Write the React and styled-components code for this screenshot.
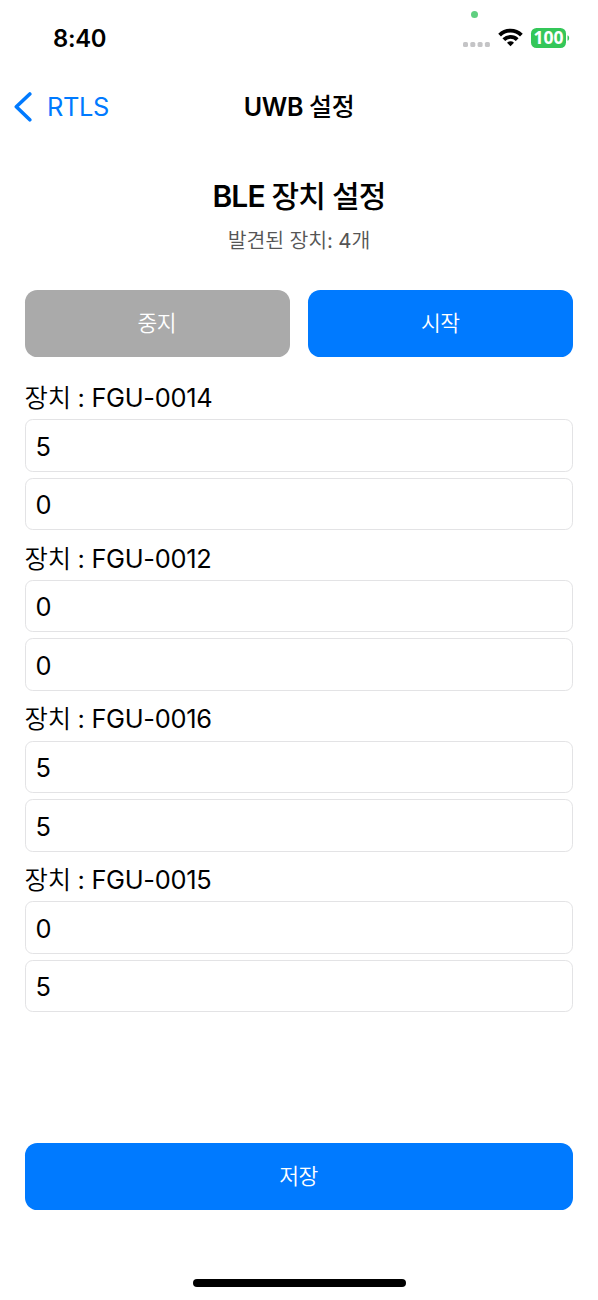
import React from 'react';
import styled, { createGlobalStyle } from 'styled-components';

const GlobalStyle = createGlobalStyle`
    * { box-sizing: border-box; }
    body {
        margin: 0;
        background: #fff;
        font-family: Inter, "Noto Sans CJK KR", sans-serif;
        color: #000;
    }
`;

const Screen = styled.div`
    width: 598px;
    height: 1300px;
    display: flex;
    flex-direction: column;
    overflow: hidden;
    background: #fff;
`;

const StatusBar = styled.div`
    height: 76px;
    padding: 0 28px 0 53px;
    display: flex;
    align-items: center;
    justify-content: space-between;
    position: relative;
`;

const Clock = styled.div`
    font-size: 23.8px;
    font-weight: 600;
    line-height: 28px;
    letter-spacing: -0.3px;
    padding-top: 2px;
`;

const StatusIcons = styled.svg`
    display: block;
    width: 107px;
    height: 34px;
    overflow: visible;
    text {
        font-family: "Open Sans", Inter, sans-serif;
        font-size: 17.5px;
        font-weight: 700;
        fill: #fff;
    }
`;

const CameraDot = styled.div`
    position: absolute;
    top: 11px;
    left: 471px;
    width: 7px;
    height: 7px;
    border-radius: 50%;
    background: #5fcf80;
`;

const NavBar = styled.div`
    height: 60px;
    padding: 2px 14px 0;
    display: grid;
    grid-template-columns: 1fr auto 1fr;
    align-items: center;
`;

const Back = styled.div`
    display: flex;
    align-items: center;
    gap: 15px;
    color: #007aff;
    font-size: 25.4px;
    line-height: 32px;
    letter-spacing: -0.4px;
`;

const NavTitle = styled.div`
    font-size: 25px;
    font-weight: 600;
    line-height: 32px;
    letter-spacing: -0.35px;
`;

// Hangul glyphs run heavier than the latin ones at the same weight
const Ko = styled.span`
    font-weight: ${(props) => props.$weight || 500};
`;

const Content = styled.div`
    flex: 1;
    padding: 0 24.6px;
    display: flex;
    flex-direction: column;
`;

const Title = styled.h1`
    margin: 40px 0 0;
    font-size: 30px;
    font-weight: 600;
    line-height: 40px;
    letter-spacing: -0.85px;
    text-align: center;
`;

const Subtitle = styled.p`
    margin: 10px 0 0;
    font-size: 20.5px;
    line-height: 30px;
    letter-spacing: -0.15px;
    text-align: center;
    color: #555;
`;

const ButtonRow = styled.div`
    display: flex;
    gap: 18.4px;
    margin-top: 34px;
`;

const Button = styled.button`
    flex: 1;
    height: 67.4px;
    padding: 0 1px 0 0;
    border: 0;
    border-radius: 12.3px;
    background: ${(props) => (props.$muted ? '#aaa' : '#007aff')};
    color: #fff;
    font-family: inherit;
    font-size: 21.5px;
    font-weight: 350;
    line-height: 67px;
    letter-spacing: -0.5px;
`;

const DeviceList = styled.div`
    margin-top: 23.6px;
    display: flex;
    flex-direction: column;
    gap: 11.55px;
`;

const Device = styled.div`
    display: flex;
    flex-direction: column;
    gap: 6.1px;
`;

const DeviceName = styled.div`
    height: 32px;
    font-size: 25.4px;
    line-height: 34px;
    letter-spacing: -0.3px;
`;

const Field = styled.input`
    display: block;
    width: 100%;
    height: 52.5px;
    padding: 1.6px 10px 0;
    border: 1px solid #e3e3e5;
    border-radius: 7.7px;
    outline: none;
    background: #fff;
    color: #000;
    font-family: inherit;
    font-size: 25.4px;
`;

const Footer = styled.div`
    display: flex;
    padding: 0 24.6px;
    height: 157px;
    flex-direction: column;
    align-items: stretch;

    ${Button} { flex: none; }
`;

const HomeBar = styled.div`
    width: 213px;
    height: 8px;
    margin: 69px auto 0;
    border-radius: 4px;
    background: #000;
`;

const devices = [
    { name: 'FGU-0014', x: '5', y: '0' },
    { name: 'FGU-0012', x: '0', y: '0' },
    { name: 'FGU-0016', x: '5', y: '5' },
    { name: 'FGU-0015', x: '0', y: '5' },
];

const App = () => (
    <Screen>
        <GlobalStyle />
        <StatusBar>
            <Clock>8:40</Clock>
            <CameraDot />
            <StatusIcons viewBox="0 -6 107 34">
                <g fill="#c4c4c6">
                    <rect x="0" y="15" width="5" height="5" rx="1.6" />
                    <rect x="7.3" y="15" width="5" height="5" rx="1.6" />
                    <rect x="14.6" y="15" width="5" height="5" rx="1.6" />
                    <rect x="21.9" y="15" width="5" height="5" rx="1.6" />
                </g>
                <g fill="none" stroke="#000" strokeWidth="3.9">
                    <path d="M36.6 8.1a15.6 15.6 0 0 1 21.8 0" />
                    <path d="M40.8 12.6a9.5 9.5 0 0 1 13.4 0" />
                </g>
                <path d="M44 15.7a5 5 0 0 1 7 0l-3.5 3.6z" fill="#000" />
                <rect x="68" y="1" width="35" height="20" rx="5.5" fill="#34c759" />
                <path d="M104.5 8.2c2.2.8 2.2 4.8 0 5.6z" fill="#34c759" />
                <text x="85.5" y="17.2" textAnchor="middle">100</text>
            </StatusIcons>
        </StatusBar>

        <NavBar>
            <Back>
                <svg width="18" height="30" viewBox="0 0 18 30" fill="none">
                    <path d="M15.8 2 2.3 14.8 15.8 27.8" stroke="#007aff" strokeWidth="3.6" strokeLinecap="round" strokeLinejoin="round" />
                </svg>
                RTLS
            </Back>
            <NavTitle>UWB <Ko>설정</Ko></NavTitle>
        </NavBar>

        <Content>
            <Title>BLE <Ko>장치 설정</Ko></Title>
            <Subtitle><Ko $weight={350}>발견된 장치</Ko>: 4<Ko $weight={350}>개</Ko></Subtitle>
            <ButtonRow>
                <Button $muted>중지</Button>
                <Button>시작</Button>
            </ButtonRow>
            <DeviceList>
                {devices.map((device) => (
                    <Device key={device.name}>
                        <DeviceName><Ko $weight={350}>장치</Ko> : {device.name}</DeviceName>
                        <Field defaultValue={device.x} />
                        <Field defaultValue={device.y} />
                    </Device>
                ))}
            </DeviceList>
        </Content>

        <Footer>
            <Button>저장</Button>
            <HomeBar />
        </Footer>
    </Screen>
);

export default App;
